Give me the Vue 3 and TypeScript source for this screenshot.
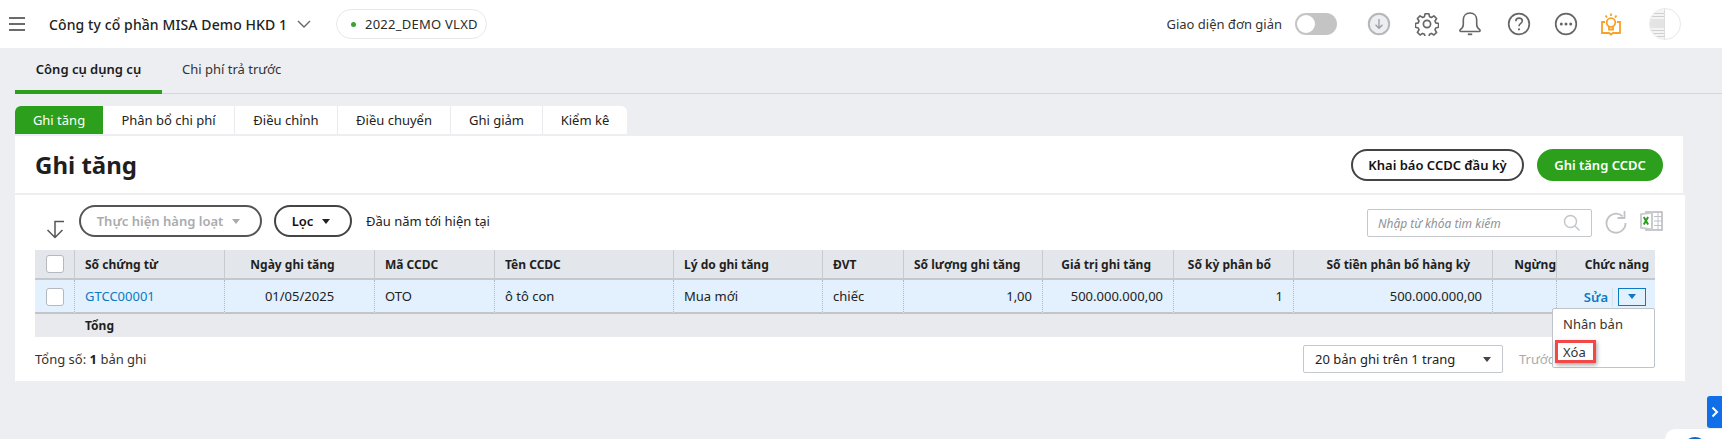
<script setup lang="ts">
interface Col { label: string; width: number; head: string; cell: string; value: string }
const columns: Col[] = [
  { label: 'Số chứng từ', width: 150, head: 'left', cell: 'link', value: 'GTCC00001' },
  { label: 'Ngày ghi tăng', width: 150, head: 'date', cell: 'center', value: '01/05/2025' },
  { label: 'Mã CCDC', width: 120, head: 'left', cell: 'left', value: 'OTO' },
  { label: 'Tên CCDC', width: 179, head: 'left', cell: 'left', value: 'ô tô con' },
  { label: 'Lý do ghi tăng', width: 149, head: 'left', cell: 'left', value: 'Mua mới' },
  { label: 'ĐVT', width: 81, head: 'left', cell: 'left', value: 'chiếc' },
  { label: 'Số lượng ghi tăng', width: 139, head: 'num', cell: 'right', value: '1,00' },
  { label: 'Giá trị ghi tăng', width: 131, head: 'num', cell: 'right', value: '500.000.000,00' },
  { label: 'Số kỳ phân bổ', width: 120, head: 'num', cell: 'right', value: '1' },
  { label: 'Số tiền phân bổ hàng kỳ', width: 199, head: 'num', cell: 'right', value: '500.000.000,00' },
  { label: 'Ngừng', width: 64, head: 'clip', cell: 'right', value: '' },
]
const subTabs = [
  { label: 'Ghi tăng', width: 88 },
  { label: 'Phân bổ chi phí', width: 132 },
  { label: 'Điều chỉnh', width: 103 },
  { label: 'Điều chuyển', width: 113 },
  { label: 'Ghi giảm', width: 92 },
  { label: 'Kiểm kê', width: 84 },
]
</script>

<template>
  <div class="page">
    <header class="topbar">
      <div class="burger"><span></span><span></span><span></span></div>
      <div class="company">Công ty cổ phần MISA Demo HKD 1</div>
      <svg class="chev" width="14" height="8" viewBox="0 0 14 8"><path d="M1 1l6 6 6-6" fill="none" stroke="#666" stroke-width="1.4"/></svg>
      <div class="db"><i></i>2022_DEMO VLXD</div>
      <div class="spacer"></div>
      <span class="simple">Giao diện đơn giản</span>
      <div class="toggle"><i></i></div>
      <div class="icons">
        <svg class="ic" width="24" height="24" viewBox="0 0 24 24"><circle cx="12" cy="12" r="10.2" fill="#eceef1" stroke="#b5b7ba" stroke-width="2"/><path d="M12 7v9M8.5 12.8L12 16.3l3.5-3.5" fill="none" stroke="#9a9c9f" stroke-width="1.3"/></svg>
        <svg class="ic" width="24" height="24" viewBox="0 0 24 24"><path d="M10 1.2h4l.7 3.1 1.9.8 2.7-1.7 2.8 2.8-1.7 2.7.8 1.9 3 .7v4l-3 .7-.8 1.9 1.7 2.7-2.8 2.800-2.700-1.700-1.900.800-.7 3h-4l-.7-3-1.900-.800-2.700 1.700-2.800-2.800 1.700-2.700-.8-1.900-3-.7v-4l3-.7.8-1.900-1.700-2.700 2.800-2.800 2.700 1.700 1.900-.8z" transform="translate(.6 .6) scale(.95)" fill="none" stroke="#666" stroke-width="1.7" stroke-linejoin="round"/><circle cx="12" cy="12" r="3.6" fill="none" stroke="#666" stroke-width="1.7"/></svg>
        <svg class="ic" width="24" height="26" viewBox="0 0 24 26"><path d="M12 2c-4.200 0-6.700 3-6.700 7v4.500c0 3-1.300 4-3 5.200-.8.600-.4 1.800.6 1.800h18.200c1 0 1.400-1.200.6-1.800-1.700-1.200-3-2.200-3-5.200V9c0-4-2.500-7-6.700-7z" fill="none" stroke="#666" stroke-width="1.6"/><path d="M9.800 23.300h4.400" stroke="#666" stroke-width="1.800"/></svg>
        <svg class="ic" width="24" height="24" viewBox="0 0 24 24"><circle cx="12" cy="12" r="10.300" fill="none" stroke="#666" stroke-width="1.700"/><path d="M8.800 9.300c0-2 1.400-3.200 3.300-3.200 1.800 0 3.200 1.100 3.200 2.900 0 2.500-3.300 2.500-3.300 5.200" fill="none" stroke="#666" stroke-width="1.600"/><circle cx="12" cy="17.300" r="1.100" fill="#666"/></svg>
        <svg class="ic" width="24" height="24" viewBox="0 0 24 24"><circle cx="12" cy="12" r="10.300" fill="none" stroke="#666" stroke-width="1.700"/><circle cx="7.300" cy="12" r="1.500" fill="#666"/><circle cx="12" cy="12" r="1.500" fill="#666"/><circle cx="16.700" cy="12" r="1.500" fill="#666"/></svg>
        <svg class="ic" width="22" height="24" viewBox="0 0 22 24"><g fill="none" stroke="#f7a128" stroke-width="1.800"><path d="M5 10H2v11h7l2 1.500 2-1.500h7V10h-3"/><circle cx="11" cy="10.500" r="4.300"/><path d="M9 15v2.500h4V15"/><path d="M11 1.500v2.500M5.500 3.500l1.500 2M16.500 3.500l-1.500 2"/></g></svg>
      </div>
      <div class="avatar">
        <div class="avatar-l"><span></span><span></span><b></b><span></span><span></span><span></span></div>
      </div>
    </header>

    <nav class="main-tabs">
      <div class="mt active">Công cụ dụng cụ</div>
      <div class="mt">Chi phí trả trước</div>
    </nav>

    <div class="sub-tabs">
      <div v-for="(t, i) in subTabs" :key="t.label" class="st" :class="{ on: i === 0 }" :style="{ width: t.width + 'px' }">{{ t.label }}</div>
    </div>

    <section class="head-panel">
      <h1>Ghi tăng</h1>
      <div class="head-actions">
        <button class="btn outline">Khai báo CCDC đầu kỳ</button>
        <button class="btn primary">Ghi tăng CCDC</button>
      </div>
    </section>

    <section class="panel">
      <div class="toolbar">
        <svg class="sort" width="20" height="20" viewBox="0 0 20 20"><path d="M18 1.500H9V17.500M1.500 10L9 17.500 16.500 10" fill="none" stroke="#555" stroke-width="1.500"/></svg>
        <button class="pill muted">Thực hiện hàng loạt<i class="caret grey"></i></button>
        <button class="pill">Lọc<i class="caret"></i></button>
        <span class="period">Đầu năm tới hiện tại</span>
        <div class="spacer"></div>
        <div class="search">
          <span>Nhập từ khóa tìm kiếm</span>
          <svg width="18" height="18" viewBox="0 0 18 18"><circle cx="7.500" cy="7.500" r="6" fill="none" stroke="#c4c6c9" stroke-width="1.500"/><path d="M12 12l4.500 4.500" stroke="#c4c6c9" stroke-width="1.500"/></svg>
        </div>
        <svg class="refresh" width="22" height="24" viewBox="0 0 22 24"><path d="M17.500 6.300A9.500 9.500 0 1 0 20.500 13" fill="none" stroke="#c0c3c6" stroke-width="1.800"/><path d="M19.500 1v7h-7" fill="none" stroke="#c0c3c6" stroke-width="1.800"/></svg>
        <svg class="excel" width="23" height="22" viewBox="0 0 23 22"><path d="M6 2h16v18H6z" fill="#fff" stroke="#b4b7ba" stroke-width="1.500"/><path d="M14 6.500h8M14 11h8M14 15.500h8M18 2v18" stroke="#bfc2c5"/><path d="M0 3.500L13 1.500v19L0 18.500z" fill="#c9cbce"/><path d="M2 5l9-1.300v14.600l-9-1.300z" fill="#fff"/><path d="M3.800 7l4.300 7.500M8.100 7l-4.300 7.500" stroke="#2ca01c" stroke-width="2"/></svg>
      </div>

      <div class="table-wrap">
        <table>
          <colgroup>
            <col style="width:40px" />
            <col v-for="c in columns" :key="c.label" :style="{ width: c.width + 'px' }" />
            <col style="width:98px" />
          </colgroup>
          <thead>
            <tr>
              <th><span class="check"></span></th>
              <th v-for="c in columns" :key="c.label" :class="'h-' + c.head">{{ c.label }}</th>
              <th class="h-fn">Chức năng</th>
            </tr>
          </thead>
          <tbody>
            <tr>
              <td><span class="check"></span></td>
              <td v-for="c in columns" :key="c.label" :class="'c-' + c.cell">{{ c.value }}</td>
              <td class="c-fn"><span class="edit">Sửa</span><span class="drop"><i></i></span></td>
            </tr>
          </tbody>
          <tfoot>
            <tr>
              <td></td>
              <td colspan="12">Tổng</td>
            </tr>
          </tfoot>
        </table>

        <div class="menu">
          <div class="mi">Nhân bản</div>
          <div class="mi">Xóa</div>
          <div class="mark"></div>
        </div>
      </div>

      <div class="pager">
        <span class="total">Tổng số: <b>1</b> bản ghi</span>
        <div class="spacer"></div>
        <div class="size">20 bản ghi trên 1 trang<i class="caret dark"></i></div>
        <span class="prev">Trước</span>
      </div>
    </section>

    <div class="side-tab">
      <svg width="8" height="12" viewBox="0 0 8 12"><path d="M1.500 1.500L6 6l-4.500 4.500" fill="none" stroke="#fff" stroke-width="2"/></svg>
    </div>
    <div class="chat"><i></i></div>
  </div>
</template>

<style>
html, body { margin: 0; padding: 0; background: #eceef2; }
</style>

<style scoped>
* { box-sizing: border-box; }
.page {
  position: relative;
  width: 1722px;
  height: 439px;
  overflow: hidden;
  background: #eceef2;
  font-family: "Noto Sans", "Liberation Sans", sans-serif;
  font-size: 13px;
  color: #1f1f1f;
}
.spacer { flex: 1; }

.topbar { display: flex; align-items: center; height: 48px; background: #fff; padding-left: 9px; }
.burger { display: flex; flex-direction: column; justify-content: space-between; width: 16px; height: 14px; margin-right: 24px; }
.burger span { height: 2px; background: #6b6b6b; }
.company { font-size: 14px; font-weight: 500; letter-spacing: .1px; color: #222; white-space: nowrap; width: 239px; }
.chev { margin-left: 9px; margin-right: 25px; }
.db { display: flex; align-items: center; width: 151px; height: 30px; padding-left: 14px; border: 1px solid #e6e8ec; border-radius: 15px; color: #2b2b2b; font-size: 13px; letter-spacing: .25px; }
.db i { width: 5px; height: 5px; border-radius: 50%; background: #3aa335; margin-right: 9px; }
.simple { font-size: 13px; color: #333; margin-right: 13px; }
.toggle { width: 42px; height: 22px; border-radius: 11px; background: #c4c4c4; padding: 2px; margin-right: 30px; }
.toggle i { display: block; width: 18px; height: 18px; border-radius: 50%; background: #fff; }
.icons { display: flex; align-items: center; }
.ic { display: block; flex: none; }
.ic:nth-child(1) { margin-right: 24px; }
.ic:nth-child(2) { margin-right: 19px; }
.ic:nth-child(3) { margin-right: 25px; }
.ic:nth-child(4) { margin-right: 23px; }
.ic:nth-child(5) { margin-right: 22px; }
.avatar { position: relative; width: 32px; height: 32px; border-radius: 50%; border: 1px solid #e8e8e8; overflow: hidden; margin-left: 27px; margin-right: 41px; background: #fff; }
.avatar-l { width: 15px; height: 30px; background: #f4f4f4; border-right: 1px solid #dcdcdc; display: flex; flex-direction: column; gap: 2px; padding-top: 4px; }
.avatar-l span { height: 1px; background: #cfcfcf; }
.avatar-l b { height: 9px; background: #e4e4e4; }

.main-tabs { display: flex; height: 46px; margin-left: 15px; border-bottom: 1px solid #d3d6da; }
.mt { height: 46px; line-height: 43px; padding: 0 20px; font-size: 13px; color: #333; }
.mt.active { width: 147px; font-weight: 600; color: #1b1b1b; border-bottom: 4px solid #2ca01c; padding: 0; text-align: center; }

.sub-tabs { display: flex; margin: 12px 0 2px 15px; height: 28px; width: 612px; background: #fff; border-radius: 6px 6px 0 0; overflow: hidden; }
.st { line-height: 28px; text-align: center; font-size: 13px; color: #222; border-right: 1px solid #e8eaed; }
.st:last-child { border-right: 0; }
.st.on { background: #2ca01c; color: #fff; border-right: 0; }

.head-panel { display: flex; align-items: center; justify-content: space-between; height: 57px; margin: 0 39px 2px 15px; padding: 0 20px; background: #fff; }
h1 { margin: 0; font-size: 24px; font-weight: 700; color: #1f1f1f; }
.head-actions { display: flex; gap: 13px; }
.btn { height: 32px; border-radius: 16px; font-family: inherit; font-size: 13px; font-weight: 600; cursor: pointer; padding: 0; }
.btn.outline { width: 173px; background: #fff; border: 2px solid #444; color: #111; }
.btn.primary { width: 126px; background: #2ca01c; border: 0; color: #fff; }

.panel { height: 186px; margin: 0 37px 0 15px; background: #fff; }
.toolbar { display: flex; align-items: center; height: 55px; padding: 0 22px 0 31px; }
.sort { margin-top: 14px; margin-right: 13px; flex: none; }
.pill { display: flex; align-items: center; justify-content: center; height: 32px; margin-top: -3px; border: 2px solid #444; border-radius: 16px; background: #fff; font-family: inherit; font-size: 13px; font-weight: 600; color: #111; padding: 0 4px 0 0; }
.pill.muted { width: 183px; color: #a9abae; border-color: #555; margin-right: 12px; }
.pill:not(.muted) { width: 78px; margin-right: 14px; }
.caret { display: inline-block; width: 0; height: 0; margin-left: 9px; border-left: 4.500px solid transparent; border-right: 4.500px solid transparent; border-top: 5px solid #222; }
.caret.grey { border-top-color: #a9abae; }
.period { font-size: 13px; margin-top: -3px; color: #222; }
.search { display: flex; align-items: center; justify-content: space-between; width: 225px; height: 28px; margin-top: 1px; padding: 0 10px; border: 1px solid #c4c8cc; border-radius: 2px; font-size: 12px; font-style: italic; color: #8e9296; }
.refresh { margin-left: 13px; margin-top: -2px; flex: none; }
.excel { margin-left: 13px; margin-top: -3px; flex: none; }

.table-wrap { position: relative; margin-left: 20px; width: 1620px; }
table { width: 1620px; border-collapse: separate; border-spacing: 0; table-layout: fixed; }
th { height: 30px; padding: 0 10px; background: #e3e6ea; border-right: 1px solid #c8cbce; border-bottom: 2px solid #c4c8cc; font-size: 12px; font-weight: 700; color: #1f1f1f; text-align: left; white-space: nowrap; overflow: hidden; }
th:first-child, tbody td:first-child { padding: 0; text-align: center; }
th:last-child, tbody td:last-child { border-right: 0; }
th.h-date { text-align: center; padding-right: 24px; }
th.h-num { text-align: right; padding-right: 22px; }
th.h-clip { text-align: right; padding: 0; }
th.h-fn { text-align: right; padding: 0 6px 0 0; }
tbody td { height: 34px; padding: 0 10px; background: #e2f1fd; border-right: 1px dotted #b5b9bd; border-bottom: 2px solid #c2c6c8; font-size: 13px; color: #222; white-space: nowrap; }
.c-link { color: #0a7ac4; }
.c-center { text-align: center; }
.c-right { text-align: right; }
td.c-fn { padding: 0 9px 0 0; text-align: right; }
.edit { color: #0a7ac4; font-weight: 600; padding-right: 4px; margin-right: 5px; border-right: 1px solid #d5e2ec; display: inline-block; height: 18px; line-height: 18px; vertical-align: middle; }
.drop { display: inline-flex; align-items: center; justify-content: center; width: 28px; height: 18px; border: 1px solid #0a7ac4; vertical-align: middle; }
.drop i { width: 0; height: 0; border-left: 4.500px solid transparent; border-right: 4.500px solid transparent; border-top: 5px solid #0a7ac4; }
.check { display: inline-block; width: 18px; height: 18px; background: #fff; border: 1px solid #b5b8bc; border-radius: 3px; vertical-align: middle; }
tfoot td { height: 23px; padding: 0 10px; background: #e8eaee; font-size: 12px; font-weight: 700; }
tfoot td:first-child { padding: 0; }

.menu { position: absolute; left: 1517px; top: 58px; width: 103px; height: 60px; background: #fff; border: 1px solid #bfc4ca; border-radius: 2px; padding-top: 1px; font-size: 13px; color: #333; z-index: 2; }
.mi { height: 28px; line-height: 28px; padding-left: 10px; }
.mark { position: absolute; left: 2px; top: 31px; width: 41px; height: 23px; border: 3px solid #f24848; box-shadow: 1px 2px 4px rgba(0,0,0,.35); }

.pager { display: flex; align-items: center; height: 28px; margin-top: 8px; padding-left: 20px; font-size: 13px; color: #333; }
.total b { color: #222; }
.size { display: flex; align-items: center; justify-content: space-between; width: 200px; height: 28px; padding: 0 11px; border: 1px solid #c4c8cc; border-radius: 2px; color: #222; }
.caret.dark { border-top-color: #444; }
.prev { margin-left: 16px; margin-right: 131px; color: #a8abae; }

.side-tab { position: absolute; right: 0; top: 396px; display: flex; align-items: center; justify-content: center; width: 15px; height: 32px; background: #0f6ee8; border-radius: 3px 0 0 3px; }
.chat { position: absolute; left: 1665px; top: 429px; width: 57px; height: 20px; background: #fff; border-radius: 10px 0 0 0; }
.chat i { display: block; width: 24px; height: 24px; margin: 8px 0 0 18px; border-radius: 50%; background: #1565c0; }
</style>
